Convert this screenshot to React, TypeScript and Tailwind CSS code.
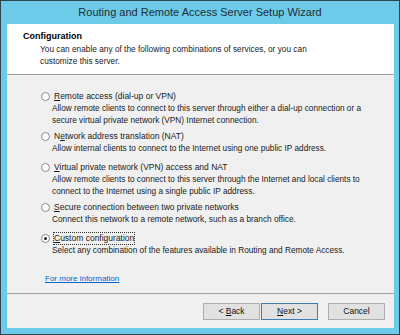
import React from "react";

const font = { fontFamily: '"Liberation Sans", Arial, sans-serif' };

function Radio({ checked }: { checked?: boolean }) {
  return (
    <span className="flex h-[9px] w-[9px] shrink-0 items-center justify-center rounded-full border border-[#8a8a8a] bg-white">
      {checked && <span className="h-[3px] w-[3px] rounded-full bg-[#1a1a1a]" />}
    </span>
  );
}

function Option({
  label,
  lines,
  checked,
  focused,
  height,
}: {
  label: React.ReactNode;
  lines: string[];
  checked?: boolean;
  focused?: boolean;
  height: string;
}) {
  return (
    <div className={`flex flex-col ${height}`}>
      <div className="flex h-[13px] items-center pl-[34px]">
        <Radio checked={checked} />
        <span
          className={`ml-[4px] leading-[11px] ${
            focused ? "outline-1 outline-dotted outline-[#333]" : ""
          }`}
        >
          {label}
        </span>
      </div>
      <div className="pl-[45px] text-[8.25px] leading-[12px]">
        {lines.map((l) => (
          <div key={l}>{l}</div>
        ))}
      </div>
    </div>
  );
}

function Btn({ children, primary }: { children: React.ReactNode; primary?: boolean }) {
  return (
    <button
      className={`flex h-[17px] w-[57px] items-center justify-center border bg-[#e1e1e1] text-[8.5px] text-[#111] ${
        primary ? "border-[#3c7fb1]" : "border-[#adadad]"
      }`}
    >
      {children}
    </button>
  );
}

export default function App() {
  return (
    <div
      className="flex h-[335px] w-[400px] flex-col border border-[#34444f] bg-[#6ccbe9] text-[8.5px] text-[#1a1a1a]"
      style={font}
    >
      <div className="flex h-[23px] shrink-0 items-center justify-center text-[11px] text-[#1e2d36]">
        Routing and Remote Access Server Setup Wizard
      </div>

      <div className="ml-[6px] mr-[5px] flex flex-1 flex-col bg-[#f0f0f0]">
        <div className="h-[51px] shrink-0 border-b border-[#a0a0a0] bg-white pl-[16px] pt-[6px]">
          <div className="text-[9px] font-bold leading-[13px] text-black">Configuration</div>
          <div className="pl-[17px] text-[8.3px] leading-[12px]">
            <div>You can enable any of the following combinations of services, or you can</div>
            <div>customize this server.</div>
          </div>
        </div>

        <div className="flex flex-1 flex-col border-b border-[#a0a0a0] pt-[15px]">
          <Option
            height="h-[40px]"
            label={
              <>
                <u>R</u>emote access (dial-up or VPN)
              </>
            }
            lines={[
              "Allow remote clients to connect to this server through either a dial-up connection or a",
              "secure virtual private network (VPN) Internet connection.",
            ]}
          />
          <Option
            height="h-[31px]"
            label={
              <>
                N<u>e</u>twork address translation (NAT)
              </>
            }
            lines={["Allow internal clients to connect to the Internet using one public IP address."]}
          />
          <Option
            height="h-[40px]"
            label={
              <>
                <u>V</u>irtual private network (VPN) access and NAT
              </>
            }
            lines={[
              "Allow remote clients to connect to this server through the Internet and local clients to",
              "connect to the Internet using a single public IP address.",
            ]}
          />
          <Option
            height="h-[31px]"
            label={
              <>
                <u>S</u>ecure connection between two private networks
              </>
            }
            lines={["Connect this network to a remote network, such as a branch office."]}
          />
          <Option
            height="h-[41px]"
            checked
            focused
            label={
              <>
                <u>C</u>ustom configuration
              </>
            }
            lines={["Select any combination of the features available in Routing and Remote Access."]}
          />
          <div className="pl-[38px] text-[8px]">
            <a className="text-[#0066cc] underline">For more information </a>
          </div>
        </div>

        <div className="flex h-[34px] shrink-0 items-center gap-[1px] pl-[196px]">
          <Btn>
            &lt;&nbsp;<u>B</u>ack
          </Btn>
          <Btn primary>
            <u>N</u>ext&nbsp;&gt;
          </Btn>
          <div className="w-[8px]" />
          <Btn>Cancel</Btn>
        </div>
      </div>
      <div className="h-[6px] shrink-0" />
    </div>
  );
}
